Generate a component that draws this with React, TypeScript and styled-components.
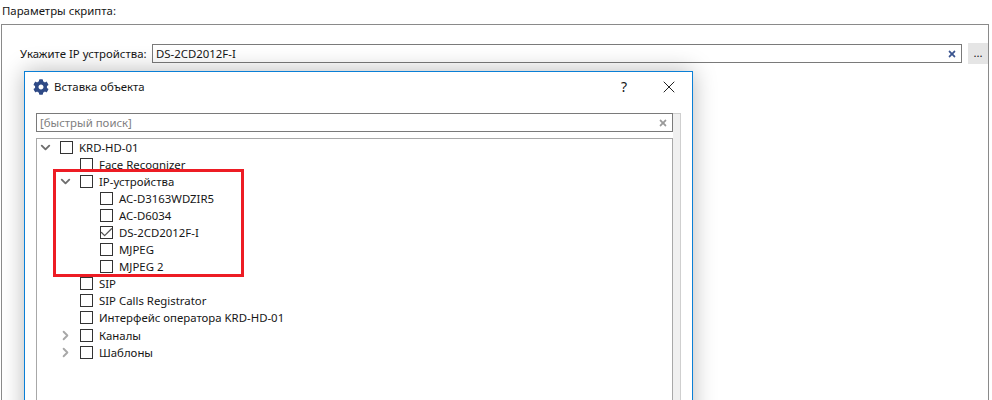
import styled, { createGlobalStyle } from 'styled-components'
import { FaCog, FaTimes } from 'react-icons/fa'
import { LuChevronDown, LuChevronRight, LuCheck, LuX } from 'react-icons/lu'

const Global = createGlobalStyle`
  html, body {
    margin: 0;
    height: 400px;
    overflow: hidden;
    background: #fff;
    font-family: "Noto Sans", "Open Sans", sans-serif;
    font-size: 11.4px;
    color: #161616;
  }
`

const Page = styled.div`
  position: relative;
  width: 992px;
  height: 400px;
  overflow: hidden;
  padding: 3px 3px 0 1px;
  box-sizing: border-box;
`

const Caption = styled.div`
  height: 21px;
  line-height: 16px;
  padding-left: 1px;
`

const GroupBox = styled.div`
  border: 1px solid #8a8a8a;
  height: 420px;
  padding: 18px 0 0 18px;
  box-sizing: border-box;
`

const FieldRow = styled.div`
  display: flex;
  align-items: center;
  height: 21px;
`

const FieldLabel = styled.span`
  width: 132px;
  flex: none;
`

const TextBox = styled.div`
  flex: 1;
  height: 19px;
  border: 1px solid #7a7a7a;
  box-sizing: border-box;
  display: flex;
  align-items: center;
  justify-content: space-between;
  padding: 0 4px 0 3px;
  margin-right: 6px;
`

const ClearIcon = styled(FaTimes)<{ $muted?: boolean }>`
  color: ${p => (p.$muted ? '#9a9a9a' : '#3b5590')};
  font-size: 10px;
`

const DotsButton = styled.div`
  width: 20px;
  height: 21px;
  background: #e5e5e5;
  text-align: center;
  line-height: 19px;
  flex: none;
`

const Dialog = styled.div`
  position: absolute;
  left: 24px;
  top: 71px;
  width: 669px;
  height: 360px;
  box-sizing: border-box;
  border: 1px solid #0a7fd6;
  background: #fff;
  box-shadow: 0 0 22px rgba(0, 0, 0, 0.28);
  padding: 0 11px;
`

const TitleBar = styled.div`
  height: 29px;
  display: flex;
  align-items: center;
`

const TitleIcon = styled(FaCog)`
  color: #2f4a86;
  font-size: 16px;
  margin: 0 5px 0 -3px;
`

const Title = styled.span`
  flex: 1;
`

const HelpMark = styled.span`
  width: 30px;
  font-size: 14px;
  margin-right: 8px;
`

const CloseIcon = styled(LuX)`
  width: 20px;
  height: 20px;
  stroke-width: 1.2;
  margin-right: 2px;
  color: #222;
`

const Body = styled.div`
  display: grid;
  grid-template-columns: 1fr 8px;
  margin-top: 12px;
  height: 330px;
`

const Column = styled.div`
  display: flex;
  flex-direction: column;
  gap: 6px;
`

const SearchBox = styled(TextBox)`
  flex: none;
  margin: 0;
  color: #808080;
`

const Scrollbar = styled.div`
  background: #f0f0f0;
  border: 1px solid #cfcfcf;
  border-left: 0;
`

const Tree = styled.div`
  flex: 1;
  border: 1px solid #a8a8a8;
`

const Row = styled.div<{ $depth: number }>`
  display: flex;
  align-items: center;
  height: 17.05px;
  padding-left: ${p => 3 + p.$depth * 20}px;
`

const Expander = styled.span`
  width: 20px;
  flex: none;
  display: flex;
  align-items: center;
  margin-left: -2px;
  margin-right: 2px;
`

const OpenArrow = styled(LuChevronDown)`
  width: 15px;
  height: 15px;
  stroke-width: 3;
  color: #6e6e6e;
`

const ClosedArrow = styled(LuChevronRight)`
  width: 15px;
  height: 15px;
  stroke-width: 3;
  color: #a8a8a8;
`

const Box = styled.span`
  width: 13px;
  height: 13px;
  border: 1px solid #333;
  box-sizing: border-box;
  flex: none;
  margin-right: 6px;
  display: flex;
  align-items: center;
  justify-content: center;
`

const Tick = styled(LuCheck)`
  width: 15px;
  height: 15px;
  flex: none;
  stroke-width: 2;
  color: #555;
`

const Highlight = styled.div`
  position: absolute;
  left: 53px;
  top: 169px;
  width: 191px;
  height: 108px;
  border: 3px solid #ed1c24;
  box-sizing: border-box;
`

type Item = { label: string; depth: number; open?: boolean; closed?: boolean; checked?: boolean }

const items: Item[] = [
  { label: 'KRD-HD-01', depth: 0, open: true },
  { label: 'Face Recognizer', depth: 1 },
  { label: 'IP-устройства', depth: 1, open: true },
  { label: 'AC-D3163WDZIR5', depth: 2 },
  { label: 'AC-D6034', depth: 2 },
  { label: 'DS-2CD2012F-I', depth: 2, checked: true },
  { label: 'MJPEG', depth: 2 },
  { label: 'MJPEG 2', depth: 2 },
  { label: 'SIP', depth: 1 },
  { label: 'SIP Calls Registrator', depth: 1 },
  { label: 'Интерфейс оператора KRD-HD-01', depth: 1 },
  { label: 'Каналы', depth: 1, closed: true },
  { label: 'Шаблоны', depth: 1, closed: true },
]

export default function App() {
  return (
    <Page>
      <Global />
      <Caption>Параметры скрипта:</Caption>
      <GroupBox>
        <FieldRow>
          <FieldLabel>Укажите IP устройства:</FieldLabel>
          <TextBox>
            DS-2CD2012F-I
            <ClearIcon />
          </TextBox>
          <DotsButton>...</DotsButton>
        </FieldRow>
      </GroupBox>
      <Dialog>
        <TitleBar>
          <TitleIcon />
          <Title>Вставка объекта</Title>
          <HelpMark>?</HelpMark>
          <CloseIcon />
        </TitleBar>
        <Body>
          <Column>
            <SearchBox>
              [быстрый поиск]
              <ClearIcon $muted />
            </SearchBox>
            <Tree>
              {items.map(item => (
                <Row key={item.label} $depth={item.depth}>
                  <Expander>
                    {item.open && <OpenArrow />}
                    {item.closed && <ClosedArrow />}
                  </Expander>
                  <Box>{item.checked && <Tick />}</Box>
                  {item.label}
                </Row>
              ))}
            </Tree>
          </Column>
          <Scrollbar />
        </Body>
      </Dialog>
      <Highlight />
    </Page>
  )
}
